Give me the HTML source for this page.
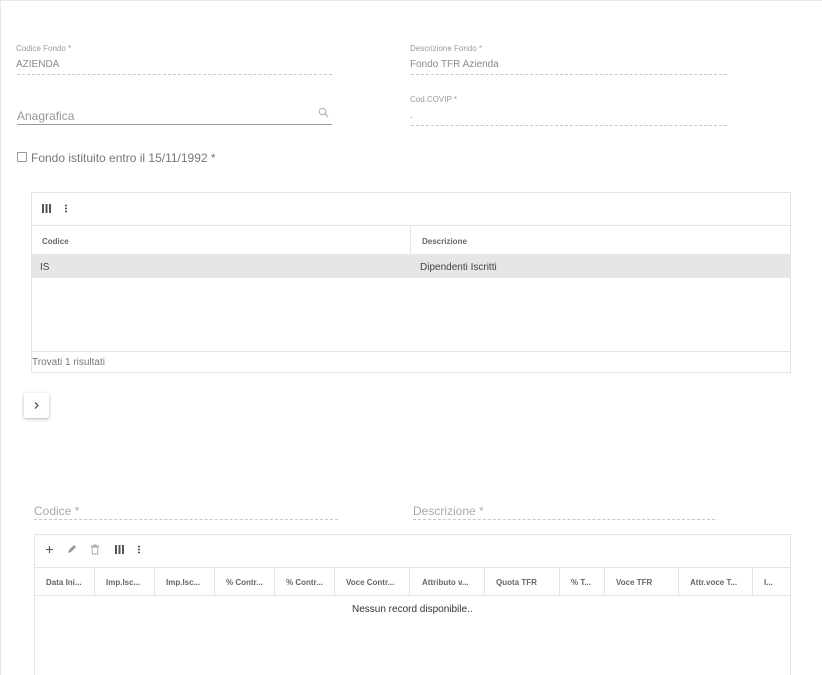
<!DOCTYPE html>
<html style="overflow:hidden;width:822px;height:675px"><head><meta charset="utf-8"><style>
*{margin:0;padding:0;box-sizing:border-box}
body{width:822px;height:675px;overflow:hidden;background:#fff;font-family:"Liberation Sans",sans-serif;position:relative}
.a{position:absolute;white-space:nowrap}
.t{margin-top:1px}
.lbl{font-size:8px;color:#9a9a9a}
.val{font-size:10px;color:#8a8a8a}
.dash{position:absolute;height:0;border-top:1px dashed #c8c8c8}
.box{position:absolute;border:1px solid #e3e3e3;background:#fff}
.th{position:absolute;font-size:8px;font-weight:bold;color:#666;margin-top:1px}
.vl{position:absolute;width:1px;background:#e3e3e3}
.hl{position:absolute;height:1px;background:#e3e3e3}
.cols{position:absolute;width:9px;height:9px;background:linear-gradient(90deg,#555 0 2px,transparent 2px 3.5px,#555 3.5px 5.5px,transparent 5.5px 7px,#555 7px 9px)}
.dots{position:absolute;width:2px;height:9px;background:radial-gradient(circle,#555 0.9px,transparent 1.1px) 0 0/2px 3px}
</style></head><body>
<div class="a" style="left:0;top:0;width:1px;height:675px;background:#e8e8e8"></div>
<div class="a" style="left:0;top:0;width:822px;height:1px;background:#e8e8e8"></div>

<div class="a lbl t" style="left:16px;top:43px">Codice Fondo *</div>
<div class="a val t" style="left:16px;top:58px">AZIENDA</div>
<div class="dash" style="left:17px;top:74px;width:315px"></div>

<div class="a lbl t" style="left:410px;top:43px">Descrizione Fondo *</div>
<div class="a val t" style="left:410px;top:58px">Fondo TFR Azienda</div>
<div class="dash" style="left:411px;top:74px;width:316px"></div>

<div class="a t" style="left:17px;top:108px;font-size:12px;color:#999">Anagrafica</div>
<svg class="a" style="left:318px;top:107px" width="11" height="11" viewBox="0 0 11 11"><circle cx="4.5" cy="4.5" r="3.3" fill="none" stroke="#aaa" stroke-width="1"/><line x1="7" y1="7" x2="10" y2="10" stroke="#aaa" stroke-width="1.2"/></svg>
<div class="a" style="left:17px;top:124px;width:315px;height:1px;background:#999"></div>

<div class="a lbl t" style="left:410px;top:94px">Cod.COVIP *</div>
<div class="a val t" style="left:410px;top:109px">.</div>
<div class="dash" style="left:411px;top:125px;width:316px"></div>

<div class="a" style="left:17px;top:152px;width:10px;height:10px;border:1px solid #999;border-radius:1px"></div>
<div class="a t" style="left:31px;top:150px;font-size:12px;color:#777">Fondo istituito entro il 15/11/1992 *</div>

<div class="box" style="left:31px;top:192px;width:760px;height:181px"></div>
<div class="cols" style="left:42px;top:204px"></div>
<div class="dots" style="left:65px;top:204px"></div>
<div class="hl" style="left:32px;top:225px;width:758px"></div>
<div class="th" style="left:42px;top:236px">Codice</div>
<div class="vl" style="left:410px;top:225px;height:29px"></div>
<div class="th" style="left:422px;top:236px">Descrizione</div>
<div class="a" style="left:32px;top:254px;width:758px;height:24px;background:#e6e6e6"></div>
<div class="a t" style="left:40px;top:261px;font-size:10px;color:#444">IS</div>
<div class="a t" style="left:420px;top:261px;font-size:10px;color:#444">Dipendenti Iscritti</div>
<div class="hl" style="left:32px;top:351px;width:758px"></div>
<div class="a t" style="left:32px;top:356px;font-size:10px;color:#777">Trovati 1 risultati</div>

<div class="a" style="left:24px;top:393px;width:25px;height:25px;background:#fff;box-shadow:0 1px 3px rgba(0,0,0,.3);border-radius:2px"></div>
<svg class="a" style="left:32px;top:401px" width="9" height="9" viewBox="0 0 9 9"><polyline points="3,1.5 6,4.5 3,7.5" fill="none" stroke="#555" stroke-width="1.3"/></svg>

<div class="a t" style="left:34px;top:503px;font-size:12px;color:#aaa">Codice *</div>
<div class="dash" style="left:34px;top:519px;width:304px"></div>
<div class="a t" style="left:413px;top:503px;font-size:12px;color:#aaa">Descrizione *</div>
<div class="dash" style="left:413px;top:519px;width:302px"></div>

<div class="box" style="left:34px;top:534px;width:757px;height:150px"></div>
<svg class="a" style="left:45px;top:545px" width="9" height="9" viewBox="0 0 9 9"><path d="M4.5 1v7M1 4.5h7" stroke="#555" stroke-width="1.1"/></svg>
<svg class="a" style="left:66px;top:544px" width="11" height="11" viewBox="0 0 11 11"><path d="M2 9l1-3 5-5 2 2-5 5z" fill="#999"/></svg>
<svg class="a" style="left:90px;top:544px" width="10" height="11" viewBox="0 0 10 11"><path d="M1 2h8M3.5 1h3M2 3h6l-.5 7h-5z" fill="none" stroke="#aaa" stroke-width="1"/></svg>
<div class="cols" style="left:115px;top:545px"></div>
<div class="dots" style="left:138px;top:545px"></div>
<div class="hl" style="left:35px;top:567px;width:755px"></div>
<div class="hl" style="left:35px;top:595px;width:755px"></div>

<div class="th" style="left:46px;top:577px">Data Ini...</div>
<div class="vl" style="left:94px;top:567px;height:28px"></div>
<div class="th" style="left:106px;top:577px">Imp.Isc...</div>
<div class="vl" style="left:154px;top:567px;height:28px"></div>
<div class="th" style="left:166px;top:577px">Imp.Isc...</div>
<div class="vl" style="left:214px;top:567px;height:28px"></div>
<div class="th" style="left:226px;top:577px">% Contr...</div>
<div class="vl" style="left:274px;top:567px;height:28px"></div>
<div class="th" style="left:286px;top:577px">% Contr...</div>
<div class="vl" style="left:334px;top:567px;height:28px"></div>
<div class="th" style="left:346px;top:577px">Voce Contr...</div>
<div class="vl" style="left:409px;top:567px;height:28px"></div>
<div class="th" style="left:422px;top:577px">Attributo v...</div>
<div class="vl" style="left:484px;top:567px;height:28px"></div>
<div class="th" style="left:496px;top:577px">Quota TFR</div>
<div class="vl" style="left:559px;top:567px;height:28px"></div>
<div class="th" style="left:571px;top:577px">% T...</div>
<div class="vl" style="left:604px;top:567px;height:28px"></div>
<div class="th" style="left:616px;top:577px">Voce TFR</div>
<div class="vl" style="left:678px;top:567px;height:28px"></div>
<div class="th" style="left:690px;top:577px">Attr.voce T...</div>
<div class="vl" style="left:752px;top:567px;height:28px"></div>
<div class="th" style="left:764px;top:577px">I...</div>

<div class="a t" style="left:352px;top:603px;font-size:10px;color:#333">Nessun record disponibile..</div>
</body></html>
